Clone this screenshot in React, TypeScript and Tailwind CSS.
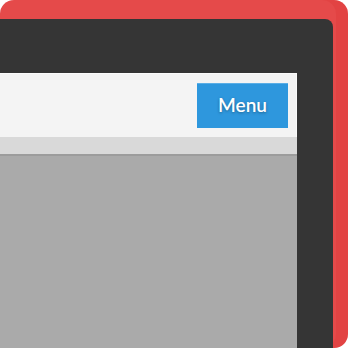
export default function App() {
  return (
    <div className="w-[348px] h-[348px] bg-white overflow-hidden">
      <div className="flex h-full flex-col rounded-[14px] bg-[#e54a4a] pt-[19px] pr-[15px] shadow-[inset_-12px_0_0_rgba(215,40,40,0.2)]">
        <div className="flex flex-1 flex-col rounded-tr-[8px] bg-[#353535] pt-[54px] pr-[36px]">
          <div className="flex h-[64px] items-center justify-end border-t border-r border-[#fbfbfb] bg-[#f4f4f4] pr-[8px]">
            <button className="flex h-[45px] w-[91px] items-center justify-center border-t border-[#5aaee6] bg-[#2e97dd] pb-[1px] font-['Lato',sans-serif] text-[19px] font-semibold text-white [text-shadow:0_1px_3px_rgba(0,0,0,0.35)]">
              Menu
            </button>
          </div>
          <div className="h-[19px] border-b-2 border-[#9c9c9c] bg-[#d9d9d9]" />
          <div className="flex-1 bg-[#aaaaaa]" />
        </div>
      </div>
    </div>
  );
}
